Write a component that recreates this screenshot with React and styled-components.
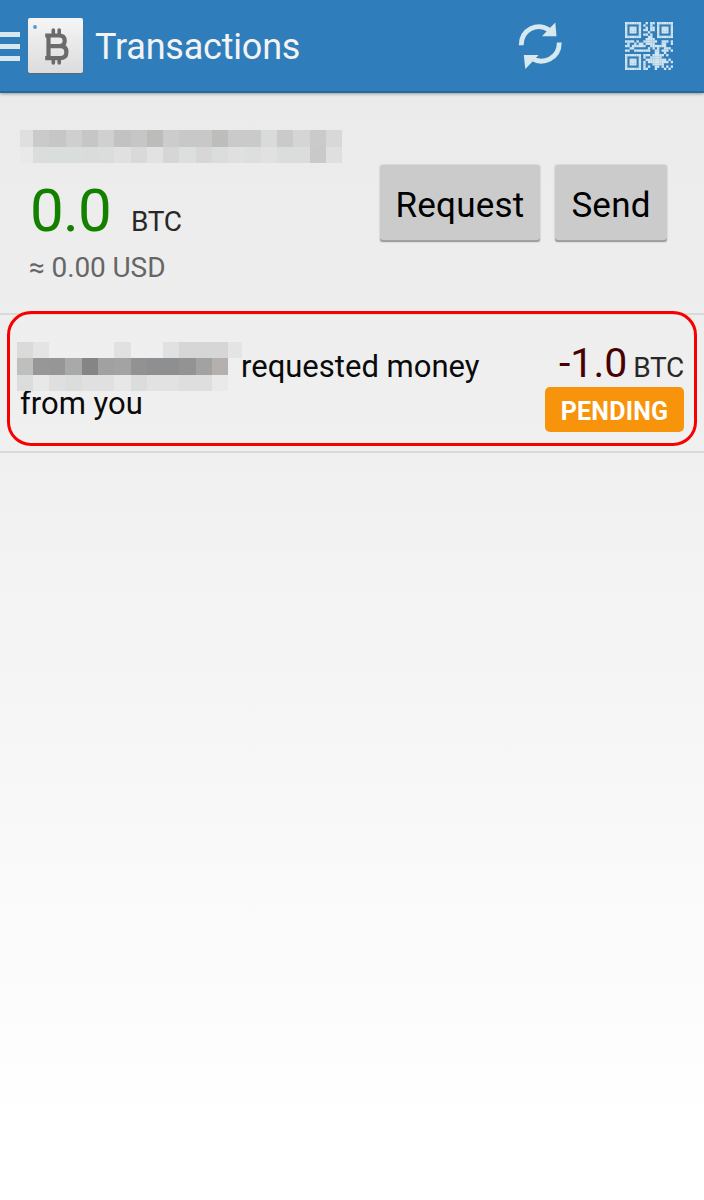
import React from 'react';
import styled, { createGlobalStyle } from 'styled-components';

const QR_ROWS = [
  '111111100101101111111',
  '100000101001001000001',
  '101110100101101011101',
  '101110101101101011101',
  '101110100010001011101',
  '100000101101001000001',
  '111111100011001111111',
  '000000000111100000000',
  '111101001111110011101',
  '010010110111100011001',
  '110111111001111111000',
  '001100000010101001110',
  '110011111110011011101',
  '000000000000011001000',
  '111111101110111110100',
  '100000101001111100000',
  '101110100111111111010',
  '101110101011111111101',
  '101110101000111110000',
  '100000101010011010101',
  '111111101100010001010',
];

const ADDRESS_CELLS = [
  '#dfdfdf', '#cacaca', '#c6c6c6', '#cfcfcf', '#c6c6c6', '#d0d0d0', '#c2c2c2', '#c6c6c6', '#bcbcba', '#cccccc',
  '#c8c8c8', '#c8c8c8', '#bdbdbb', '#cacaca', '#cacaca', '#d8dbda', '#cacaca', '#d5d5d5', '#cacaca', '#d8d8d8',
  '#e9e9e9', '#dadddb', '#d9dddb', '#d9dddb', '#dadcdb', '#dadddc', '#e0e0e0', '#d9d9d9', '#e2e2e2', '#d6d6d6',
  '#dbdfde', '#d7d7d7', '#dadddc', '#e0e0e0', '#dcdfde', '#e1e1e1', '#dadddc', '#dadddc', '#c9c9c9', '#dfdfdf',
];

const NAME_CELLS = [
  '#dadada', '#e4e4e4', 'transparent', 'transparent', 'transparent', 'transparent', '#e1e1e1',
  'transparent', 'transparent', '#e1e1e1', '#d6d6d6', '#d6d6d6', '#d6d6d6', '#e4e4e4',
  '#bfbfbd', '#979797', '#969696', '#a9a9a9', '#858585', '#a1a1a1', '#a3a3a3',
  '#929292', '#8d8f91', '#8d8f91', '#939393', '#a2a2a3', '#b5b0ae', 'transparent',
  '#dadddc', '#e8e8e8', '#dfdfdf', '#dadddc', '#e0e0e0', '#e0e0e0', '#e7e7e7',
  '#dadddc', '#e2e2e2', '#e2e2e2', '#dedede', '#dedede', '#e9e9e9', 'transparent',
];

function BitcoinIcon() {
  return (
    <svg width="55" height="55" viewBox="0 0 55 55">
      <circle cx="7" cy="9" r="1.9" fill="#5299cc" />
      <g fill="none" stroke="#6b6b6b">
        <path d="M25.3 12v4M31.2 12v4M25.3 41.5v3.5M31.2 41.5v3.5" strokeWidth="3.6" strokeLinecap="round" />
        <path d="M17.2 17.5h14q5.5 0 5.5 5.3t-5.5 5.3h-9.7M30.5 28.1h2.1q5.8 0 5.8 6t-5.8 6H17.2M20.5 17.5v22.6" strokeWidth="4.2" />
      </g>
    </svg>
  );
}

function RefreshIcon() {
  return (
    <svg width="44" height="47" viewBox="0 0 44 47">
      <g fill="none" stroke="#d8e8ef" strokeWidth="4.8">
        <path d="M3.2 23.2C3.2 7.4 19.5 0 31.2 8" />
        <path d="M41.3 20.6C41.3 36.6 25 43.5 13 36" />
      </g>
      <path d="M37.3 .5L38.5 14.3H24L28 10Z M5.8 33H20.5L16.5 37.5L7.3 47Z" fill="#d8e8ef" />
    </svg>
  );
}

function QrIcon() {
  return (
    <svg width="48" height="48" viewBox="0 0 21 21">
      {QR_ROWS.map((row, y) =>
        row.split('').map((bit, x) => bit === '1' && (
          <rect key={x + '-' + y} x={x} y={y} width="1.04" height="1.04" fill="#d3e5ee" />
        ))
      )}
    </svg>
  );
}

function Mosaic({ cells, ...rest }) {
  return (
    <MosaicGrid {...rest}>
      {cells.map((color, i) => <Cell key={i} $color={color} />)}
    </MosaicGrid>
  );
}

function App() {
  return (
    <Screen>
      <GlobalStyle />
      <Header>
        <MenuBars><Bar /><Bar /><Bar /></MenuBars>
        <AppLogo><BitcoinIcon /></AppLogo>
        <Title>Transactions</Title>
        <IconButton aria-label="Refresh" $gap={63}><RefreshIcon /></IconButton>
        <IconButton aria-label="Scan" $gap={31}><QrIcon /></IconButton>
      </Header>
      <Account>
        <Balance>
          <Mosaic cells={ADDRESS_CELLS} $columns="13px repeat(19, 16.28px)" $row="16.5px" />
          <Amount>
            <Green>0.0</Green>
            <Currency>BTC</Currency>
          </Amount>
          <Fiat>≈ 0.00 USD</Fiat>
        </Balance>
        <Actions>
          <Button $width={160}>Request</Button>
          <Button $width={112}>Send</Button>
        </Actions>
      </Account>
      <Transaction>
        <Description>
          <HiddenName>
            <Mosaic cells={NAME_CELLS} $columns="repeat(13, 16.3px) 14px" $row="16.3px" />
          </HiddenName>
          requested money from you
        </Description>
        <Result>
          <Debit><Red>-1.0</Red>BTC</Debit>
          <Status>PENDING</Status>
        </Result>
        <Highlight />
      </Transaction>
    </Screen>
  );
}

export default App;

const GlobalStyle = createGlobalStyle`
  body {
    margin: 0;
    font-family: Roboto, sans-serif;
  }
  * {
    box-sizing: border-box;
  }
`;

const Screen = styled.div`
  width: 704px;
  height: 1200px;
  overflow: hidden;
  background: linear-gradient(#e8e8e8 0, #ebebeb 110px, #f0f0f0 450px, #ffffff 1130px);
`;

const Header = styled.header`
  display: flex;
  align-items: center;
  height: 93px;
  background: #2f7ebb;
  border-bottom: 2px solid #246a9f;
  box-shadow: 0 1px 3px rgba(0, 0, 0, 0.35);
`;

const MenuBars = styled.div`
  display: flex;
  flex-direction: column;
  gap: 7px;
  width: 28px;
  padding-top: 2px;
`;

const Bar = styled.span`
  width: 20px;
  height: 5px;
  background: #d8e8ef;
`;

const AppLogo = styled.div`
  width: 55px;
  height: 55px;
  border-radius: 2px;
  background: linear-gradient(#f5f5f5, #dcdcdc);
  box-shadow: 0 1px 1px #63676b;
`;

const Title = styled.h1`
  flex: 1;
  margin: 2px 0 0 12px;
  color: #f3f3f3;
  font-size: 36px;
  font-weight: 400;
  letter-spacing: -0.2px;
`;

const IconButton = styled.button`
  display: flex;
  padding: 0;
  margin-right: ${(props) => props.$gap}px;
  border: 0;
  background: none;
`;

const Account = styled.section`
  display: flex;
  justify-content: space-between;
  height: 222px;
  padding: 37px 37px 0 20px;
  border-bottom: 2px solid #d9d9d9;
`;

const Balance = styled.div`
  display: flex;
  flex-direction: column;
`;

const MosaicGrid = styled.div`
  display: grid;
  grid-template-columns: ${(props) => props.$columns};
  grid-auto-rows: ${(props) => props.$row};
`;

const Cell = styled.span`
  background: ${(props) => props.$color};
`;

const Amount = styled.div`
  display: flex;
  align-items: baseline;
  height: 70px;
  margin-top: 13px;
  padding-left: 10px;
  line-height: 70px;
`;

const Green = styled.span`
  width: 101px;
  color: #148000;
  font-size: 60px;
  letter-spacing: -0.8px;
`;

const Currency = styled.span`
  color: #2a2728;
  font-size: 28px;
  letter-spacing: -0.3px;
`;

const Fiat = styled.div`
  margin-top: 5px;
  padding-left: 9px;
  color: #666;
  font-size: 28px;
  letter-spacing: -0.1px;
  line-height: 34px;
`;

const Actions = styled.div`
  display: flex;
  gap: 15px;
  padding-top: 35px;
`;

const Button = styled.button`
  width: ${(props) => props.$width}px;
  height: 77px;
  padding: 3px 0 0;
  border: 0;
  border-radius: 3px;
  background: #cbcbcb;
  box-shadow: inset 0 -2px #a0a0a0, 0 0 1px 1px rgba(0, 0, 0, 0.08);
  color: #000;
  font-family: inherit;
  font-size: 35px;
  letter-spacing: 0.2px;
`;

const Transaction = styled.article`
  position: relative;
  display: flex;
  justify-content: space-between;
  height: 138px;
  padding: 26px 20px 0;
  border-bottom: 2px solid #d9d9d9;
`;

const Description = styled.p`
  width: 480px;
  margin: 7px 0 0;
  color: #0a0a0a;
  font-size: 31px;
  line-height: 37px;
`;

const HiddenName = styled.span`
  position: relative;
  display: inline-block;
  width: 221px;
  height: 20px;

  > div {
    position: absolute;
    top: -15px;
    left: -3.5px;
  }
`;

const Result = styled.div`
  display: flex;
  flex-direction: column;
  align-items: flex-end;
`;

const Debit = styled.div`
  height: 46px;
  color: #2a2728;
  font-size: 28px;
  letter-spacing: -0.3px;
  line-height: 44px;
`;

const Red = styled.span`
  margin-right: 6px;
  color: #480000;
  font-size: 41px;
  letter-spacing: 0;
`;

const Status = styled.span`
  width: 139px;
  height: 45px;
  border-radius: 5px;
  background: #f7940b;
  color: #fff;
  font-size: 25px;
  font-weight: 700;
  letter-spacing: 0.2px;
  line-height: 49px;
  text-align: center;
`;

// red frame drawn over the row and its dividers
const Highlight = styled.div`
  position: absolute;
  top: -4px;
  left: 7px;
  width: 690px;
  height: 135px;
  border: 3px solid #f90000;
  border-radius: 24px;
  pointer-events: none;
`;
